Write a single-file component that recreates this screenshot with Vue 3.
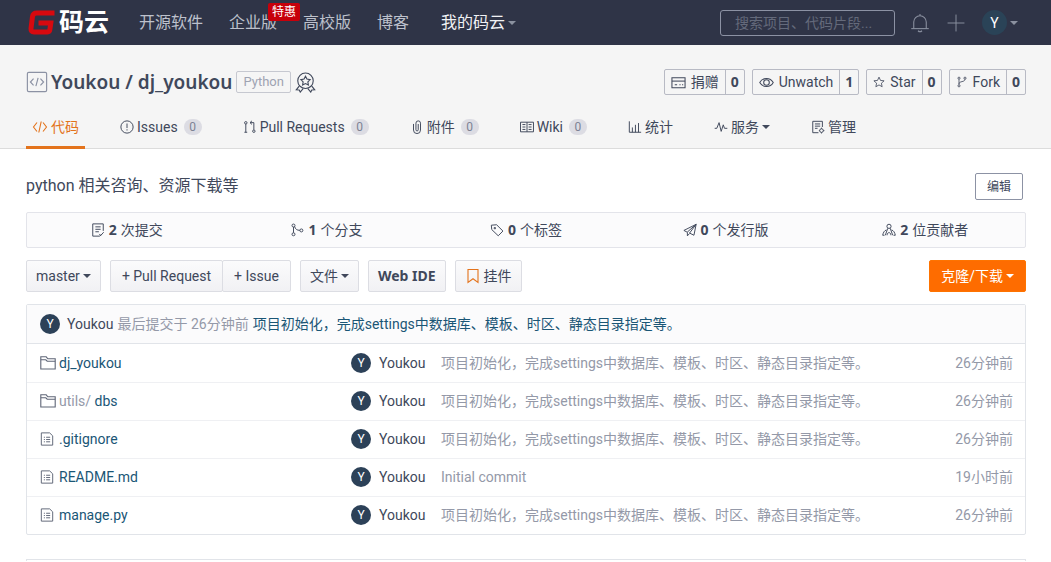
<script setup>
import { h } from 'vue'

const shapes = {
  code: ['M5 3.5 1.5 8 5 12.5', 'M11 3.5 14.5 8 11 12.5', 'M9.2 2.5 6.8 13.5'],
  codeBox: ['M2 1h12q1 0 1 1v12q0 1-1 1H2q-1 0-1-1V2q0-1 1-1z', 'M5.5 5.5 3.2 8l2.3 2.5', 'M10.5 5.5 12.8 8l-2.3 2.5', 'M8.8 5 7.2 11'],
  medal: ['M8 .8a5.9 5.9 0 1 1 0 11.8A5.9 5.9 0 1 1 8 .8z', 'M8 3.2l1.1 2.2 2.4.4-1.7 1.7.4 2.4L8 8.8 5.8 9.9l.4-2.4-1.7-1.7 2.4-.4z', 'M3.2 10.8 1 13.6l2.2.1.8 1.6 2.2-2.6', 'M12.8 10.8l2.2 2.8-2.2.1-.8 1.6-2.2-2.6'],
  issue: ['M8 1a7 7 0 1 1 0 14A7 7 0 1 1 8 1z', 'M8 4v5.2', 'M8 10.6V12'],
  pull: ['M3.2 1.8a1.4 1.4 0 1 1 0 2.8 1.4 1.4 0 1 1 0-2.8z', 'M3.2 4.6V14', 'M1.6 14h3.2', 'M12.4 11.4a1.4 1.4 0 1 1 0 2.8 1.4 1.4 0 1 1 0-2.8z', 'M12.4 11.2V3H8.2', 'M10.2 1 8 3l2.2 2'],
  clip: ['M4 4.5v7a4 4 0 0 0 8 0V3.6a2.6 2.6 0 0 0-5.2 0v7.6a1.3 1.3 0 0 0 2.6 0V4.6'],
  book: ['M.6 2.5h14.8v11H.6z', 'M8 2.5v11', 'M2.8 5.2h3.4M2.8 8h3.4M2.8 10.8h3.4M9.8 5.2h3.4M9.8 8h3.4M9.8 10.8h3.4'],
  chart: ['M1.5 1.5V14H15', 'M5 14V8.5M8.5 14V5.5M12 14V3.5'],
  pulse: ['M.8 9.5h2.4L5.8 3l2.4 10 2.4-7.5 1.4 4h3.2'],
  manage: ['M13 8V1.5H2v13h6.5', 'M4.5 4.5h6M4.5 7h6M4.5 9.5h3', 'M12 10a2.1 2.1 0 1 1 0 4.2 2.1 2.1 0 1 1 0-4.2z', 'M12 8.8V10M12 14.2v1.2M9 12.1h.9M14.1 12.1h1.2'],
  card: ['M1 3h14v10.5H1z', 'M1 6.5h14', 'M4 10.3h2.5M9 10.3h1.2M11.8 10.3H13'],
  eye: ['M.8 8C4 2.2 12 2.2 15.2 8 12 13.8 4 13.8.8 8z', 'M8 5a3 3 0 1 1 0 6 3 3 0 1 1 0-6z'],
  star: ['M8 1.5l2 4.4 4.8.5-3.6 3.2 1 4.7L8 11.9l-4.2 2.4 1-4.7L1.2 6.4 6 5.9z'],
  fork: ['M4 1.5a1.4 1.4 0 1 1 0 2.8 1.4 1.4 0 1 1 0-2.8z', 'M12 1.5a1.4 1.4 0 1 1 0 2.8 1.4 1.4 0 1 1 0-2.8z', 'M4 11.7a1.4 1.4 0 1 1 0 2.8 1.4 1.4 0 1 1 0-2.8z', 'M4 4.3v7.4', 'M12 4.3C12 8.5 4 6.5 4 10.5'],
  commits: ['M14 9V1H2v14h8l2-2', 'M5 4.4h6M5 7.2h6M5 10h4', 'M9.5 12.5l1.6 1.8 3.4-3.8'],
  branch: ['M4 1.2a1.7 1.7 0 1 1 0 3.4 1.7 1.7 0 1 1 0-3.4z', 'M4 11.2a1.7 1.7 0 1 1 0 3.4 1.7 1.7 0 1 1 0-3.4z', 'M13 6.8a1.7 1.7 0 1 1 0 3.4 1.7 1.7 0 1 1 0-3.4z', 'M4 4.6v6.6', 'M5.3 4C6 7 8 8.4 11.3 8.4'],
  tag: ['M1.5 2.5 7.5 2l7.3 7.2-5.4 5.4L2 7.5z', 'M4.8 5.2h1.4v1.4H4.8z'],
  plane: ['M15 1.5 1 8.5l3.8 2L15 1.5 12.5 14 7.5 11.5 15 1.5', 'M5 10.7v4l2.6-2.8'],
  people: ['M8 1.4a2.4 2.4 0 1 1 0 4.8 2.4 2.4 0 1 1 0-4.8z', 'M6.6 6 3.8 14M9.4 6l2.8 8', 'M5 8C2.6 8.6 1.4 11 .8 14h2', 'M11 8c2.4.6 3.6 3 4.2 6h-2', 'M5.8 14c0-4 4.4-4 4.4 0'],
  bookmark: ['M3 1.5h10v13L8 10.8l-5 3.7z'],
  folder: ['M.8 14V1.8h5.4l1.6 2h7.4V14z', 'M.8 4.8h5l1.4 1.4h8'],
  file: ['M1.5 1H11l3.5 3.4V15h-13z', 'M4.4 6h1.2M7 6h4.6M4.4 8.6h1.2M7 8.6h4.6M4.4 11.2h1.2M7 11.2h4.6'],
  bell: ['M8 .8v1.4', 'M1 12.5h14', 'M3 12.3V7.2a5 5 0 0 1 10 0v5.1', 'M6.4 14.2q1.6 1.6 3.2 0'],
  plus: ['M8 .5v15M.5 8h15']
}

const Icon = (props) =>
  h(
    'svg',
    { width: props.size, height: props.size, viewBox: '0 0 16 16', fill: 'none', stroke: 'currentColor', 'stroke-width': props.size > 17 ? 0.85 : 1.1, 'aria-hidden': 'true' },
    shapes[props.name].map((d) => h('path', { d }))
  )
Icon.props = { name: String, size: { type: Number, default: 14 } }

const actions = [
  { icon: 'card', size: 15, label: '捐赠', count: 0 },
  { icon: 'eye', size: 15, label: 'Unwatch', count: 1 },
  { icon: 'star', size: 12, label: 'Star', count: 0 },
  { icon: 'fork', size: 12, label: 'Fork', count: 0 }
]

const tabs = [
  { icon: 'code', size: 16, label: '代码', active: true },
  { icon: 'issue', label: 'Issues', count: 0 },
  { icon: 'pull', label: 'Pull Requests', count: 0 },
  { icon: 'clip', label: '附件', count: 0 },
  { icon: 'book', label: 'Wiki', count: 0 },
  { icon: 'chart', label: '统计' },
  { icon: 'pulse', label: '服务', caret: true },
  { icon: 'manage', label: '管理' }
]

const stats = [
  { icon: 'commits', count: 2, label: '次提交' },
  { icon: 'branch', count: 1, label: '个分支' },
  { icon: 'tag', count: 0, label: '个标签' },
  { icon: 'plane', count: 0, label: '个发行版' },
  { icon: 'people', count: 2, label: '位贡献者' }
]

const message = '项目初始化，完成settings中数据库、模板、时区、静态目录指定等。'
const files = [
  { icon: 'folder', name: 'dj_youkou', message, time: '26分钟前' },
  { icon: 'folder', parent: 'utils/', name: 'dbs', message, time: '26分钟前' },
  { icon: 'file', name: '.gitignore', message, time: '26分钟前' },
  { icon: 'file', name: 'README.md', message: 'Initial commit', time: '19小时前' },
  { icon: 'file', name: 'manage.py', message, time: '26分钟前' }
]
</script>

<template>
  <div class="page">
    <header class="topbar">
      <a class="logo" href="#" aria-label="码云">
        <svg width="27" height="25" viewBox="0 0 27 25" fill="none" stroke="#d7090f" stroke-width="5" aria-hidden="true">
          <path d="M26.5 3H9Q5 3 4.5 6.5L3 18.5Q2.8 22 6 22h13.5q2 0 2.3-2l1-7H10.5" />
        </svg>
        <span>码云</span>
      </a>
      <nav class="menu">
        <a href="#">开源软件</a>
        <a href="#" class="promo">企业版<span class="flag">特惠</span></a>
        <a href="#">高校版</a>
        <a href="#">博客</a>
      </nav>
      <a href="#" class="mine">我的码云<i class="caret"></i></a>
      <input class="search" type="text" placeholder="搜索项目、代码片段..." aria-label="搜索" />
      <button class="tool" aria-label="通知"><Icon name="bell" :size="20" /></button>
      <button class="tool" aria-label="新建"><Icon name="plus" :size="18" /></button>
      <button class="tool user" aria-label="用户"><span class="avatar large">Y</span><i class="caret"></i></button>
    </header>

    <section class="repo">
      <div class="title-row">
        <Icon class="repo-icon" name="codeBox" :size="22" />
        <h1><a href="#">Youkou</a> / <a href="#">dj_youkou</a></h1>
        <a class="lang" href="#">Python</a>
        <Icon class="medal" name="medal" :size="21" />
        <div class="actions">
          <div v-for="a in actions" :key="a.label" class="action">
            <button><Icon :name="a.icon" :size="a.size" />{{ a.label }}</button>
            <a href="#">{{ a.count }}</a>
          </div>
        </div>
      </div>
      <nav class="tabs">
        <a v-for="t in tabs" :key="t.label" href="#" :class="{ active: t.active }">
          <Icon :name="t.icon" :size="t.size || 14" /><span>{{ t.label }}</span>
          <span v-if="t.count !== undefined" class="count">{{ t.count }}</span>
          <i v-if="t.caret" class="caret"></i>
        </a>
      </nav>
    </section>

    <main class="content">
      <div class="desc">
        <p>python 相关咨询、资源下载等</p>
        <button>编辑</button>
      </div>

      <div class="stats">
        <a v-for="s in stats" :key="s.label" href="#"><Icon :name="s.icon" /><b>{{ s.count }}</b>{{ s.label }}</a>
      </div>

      <div class="toolbar">
        <button class="btn">master<i class="caret"></i></button>
        <div class="group">
          <button class="btn">+ Pull Request</button>
          <button class="btn">+ Issue</button>
        </div>
        <button class="btn">文件<i class="caret"></i></button>
        <button class="btn strong">Web IDE</button>
        <button class="btn widget"><Icon name="bookmark" :size="16" />挂件</button>
        <button class="btn clone">克隆/下载<i class="caret"></i></button>
      </div>

      <div class="tree">
        <div class="latest">
          <span class="avatar">Y</span>
          <a class="author" href="#">Youkou</a>
          <span class="muted">最后提交于 26分钟前</span>
          <a class="link" href="#">{{ message }}</a>
        </div>
        <table>
          <tbody>
            <tr v-for="f in files" :key="f.name">
              <td class="name">
                <div class="cell">
                  <span class="glyph"><Icon :name="f.icon" :size="f.icon === 'folder' ? 16 : 14" /></span>
                  <a class="link" href="#"><span v-if="f.parent" class="muted">{{ f.parent }}&nbsp;</span>{{ f.name }}</a>
                </div>
              </td>
              <td class="who"><div class="cell"><span class="avatar">Y</span><a class="author" href="#">Youkou</a></div></td>
              <td class="muted">{{ f.message }}</td>
              <td class="muted time">{{ f.time }}</td>
            </tr>
          </tbody>
        </table>
      </div>
      <div class="readme"></div>
    </main>
  </div>
</template>

<style>
body {
  background: #fff;
}
</style>

<style scoped>
.page {
  font: 14px/20px Roboto, "Noto Sans CJK SC", sans-serif;
  color: #40485b;
}
.page * {
  box-sizing: border-box;
}
a {
  color: inherit;
  text-decoration: none;
}
button,
input {
  font: inherit;
  color: inherit;
  margin: 0;
}
button {
  display: inline-flex;
  align-items: center;
  justify-content: center;
  background: none;
  border: 0;
  padding: 0;
  white-space: nowrap;
}
svg {
  flex: none;
}
.caret {
  flex: none;
  display: inline-block;
  border: 4px solid transparent;
  border-top-color: currentColor;
  border-bottom: 0;
  margin-left: 3px;
}
.avatar {
  flex: none;
  display: inline-flex;
  align-items: center;
  justify-content: center;
  width: 20px;
  height: 20px;
  border-radius: 50%;
  background: #2c4158;
  color: #fff;
  font-size: 12px;
}
.avatar.large {
  width: 25px;
  height: 25px;
  font-size: 14px;
  background: #2a4357;
}

.topbar {
  display: flex;
  align-items: center;
  height: 45px;
  padding: 0 33px 0 28px;
  background: #2f3447;
  color: #bdc1cc;
  font-size: 16px;
}
.logo {
  display: flex;
  align-items: center;
  gap: 4px;
  color: #fff;
  font-size: 25px;
  font-weight: 700;
}
.menu {
  display: flex;
  gap: 26px;
  margin-left: 30px;
}
.promo {
  position: relative;
}
.flag {
  position: absolute;
  left: 39px;
  top: -10px;
  width: 32px;
  background: #c7000b;
  border-radius: 2px;
  color: #fff;
  font-size: 12px;
  line-height: 18px;
  text-align: center;
}
.mine {
  display: flex;
  align-items: center;
  margin-left: 32px;
  color: #f0f1f4;
}
.mine .caret,
.user .caret {
  color: #8b91a0;
}
.search {
  width: 175px;
  height: 26px;
  margin-left: auto;
  margin-right: 15px;
  padding: 0 14px;
  border: 1px solid #8c92a4;
  border-radius: 3px;
  background: transparent;
  font-size: 14px;
}
.search::placeholder {
  color: #646a7b;
  opacity: 1;
}
.tool {
  color: #8b91a0;
  margin-right: 17px;
}
.tool.user {
  margin-right: 0;
}

.repo {
  background: #f5f5f5;
  border-bottom: 1px solid #dcdcdc;
  padding: 24px 25px 0 26px;
}
.title-row {
  display: flex;
  align-items: center;
  height: 26px;
}
.repo-icon {
  color: #8c92a4;
}
h1 {
  margin: 0 4px 0 3px;
  font: 600 19px/24px "Noto Sans", sans-serif;
}
.lang {
  padding: 0 6px;
  border: 1px solid #c6c8d0;
  border-radius: 2px;
  color: #9ea3b2;
  font-size: 13px;
}
.medal {
  margin-left: 4px;
}
.actions {
  display: flex;
  gap: 7px;
  margin-left: auto;
}
.action {
  display: flex;
  height: 26px;
  border: 1px solid #b8bac4;
  border-radius: 2px;
}
.action button {
  gap: 5px;
  padding: 0 6px;
}
.action a {
  padding: 0 5px;
  border-left: 1px solid #b8bac4;
  font: 700 14px/24px "Noto Sans", sans-serif;
}
.tabs {
  display: flex;
  gap: 29px;
  margin-top: 12px;
  margin-bottom: -1px;
}
.tabs a {
  display: flex;
  align-items: center;
  gap: 3px;
  height: 42px;
  padding: 0 6px;
  border-bottom: 3px solid transparent;
}
.tabs .active {
  color: #e3731c;
  border-color: #e3731c;
}
.tabs .caret {
  margin-left: 0;
}
.count {
  width: 18px;
  margin-left: 3px;
  border-radius: 9px;
  background: #dcdce3;
  color: #7d8294;
  font-size: 12px;
  line-height: 16px;
  text-align: center;
}

.content {
  padding: 24px 25px 0 26px;
}
.desc {
  display: flex;
  align-items: flex-start;
  justify-content: space-between;
  padding-right: 3px;
}
.desc p {
  margin: 0;
  font-size: 16px;
  line-height: 26px;
}
.desc button {
  width: 48px;
  height: 27px;
  border: 1px solid #8c92a4;
  border-radius: 2px;
  font-size: 12px;
}
.stats {
  display: grid;
  grid-template-columns: repeat(5, 1fr);
  margin-top: 12px;
  border: 1px solid #e3e4ea;
  border-radius: 2px;
  background: #fbfbfc;
}
.stats a {
  display: flex;
  align-items: center;
  justify-content: center;
  gap: 4px;
  height: 34px;
}
.stats b {
  font: 700 14px/20px "Noto Sans", sans-serif;
}
.toolbar {
  display: flex;
  gap: 9px;
  margin-top: 12px;
}
.btn {
  height: 32px;
  padding: 0 9px;
  border: 1px solid #dcdde3;
  border-radius: 2px;
  background: linear-gradient(#fbfbfc, #f1f1f4);
}
.group {
  display: flex;
}
.group .btn {
  padding: 0 11px;
}
.group .btn + .btn {
  margin-left: -1px;
}
.strong {
  font-family: "Noto Sans", sans-serif;
  font-weight: 700;
}
.widget {
  gap: 3px;
}
.widget svg {
  color: #e3731c;
}
.clone {
  margin-left: auto;
  padding: 0 11px;
  border-color: #fe7300;
  background: #fe6c00;
  color: #fff;
}
.tree {
  margin-top: 12px;
  border: 1px solid #e1e4e9;
  border-radius: 2px;
}
.latest {
  display: flex;
  align-items: center;
  gap: 4px;
  height: 39px;
  padding: 0 13px;
  background: #fbfbfc;
  border-bottom: 1px solid #e1e4e9;
}
.latest .avatar {
  margin-right: 3px;
}
.muted {
  color: #9499a8;
}
.link {
  color: #1a5676;
}
table {
  width: 100%;
  border-collapse: collapse;
}
td {
  height: 38px;
  padding: 0;
}
tr + tr td {
  border-top: 1px solid #eff0f3;
}
.cell {
  display: flex;
  align-items: center;
}
.name {
  width: 324px;
  padding-left: 13px;
}
.glyph {
  display: flex;
  width: 19px;
  color: #5f6677;
}
.who {
  width: 90px;
}
.who .avatar {
  margin-right: 8px;
}
.time {
  padding-right: 12px;
  text-align: right;
}
.readme {
  height: 2px;
  margin-top: 24px;
  border: 1px solid #e1e4e9;
  border-bottom: 0;
}
</style>
